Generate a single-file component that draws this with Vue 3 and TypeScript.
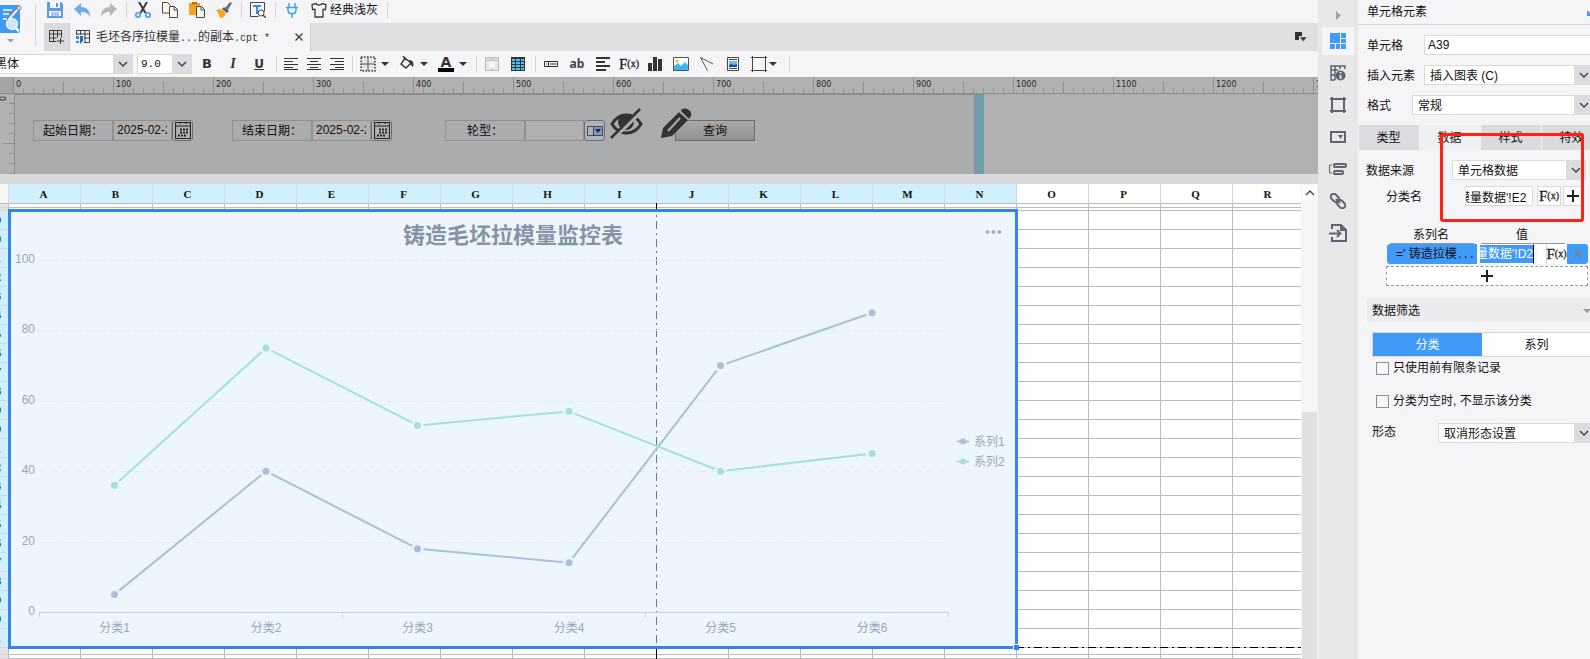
<script setup lang="ts">
import { ref } from 'vue'

interface Series { name: string; color: string; values: number[] }

const columns = 'ABCDEFGHIJKLMNOPQR'.split('')
const selectedColumns = 14
const rows = Array.from({ length: 23 }, (_, i) => 39 + i)
const rulerMarks = Array.from({ length: 14 }, (_, i) => i * 100)

const categories = ['分类1', '分类2', '分类3', '分类4', '分类5', '分类6']
const series: Series[] = [
  { name: '系列1', color: '#a7c1db', values: [5, 40, 18, 14, 70, 85] },
  { name: '系列2', color: '#a6e0dc', values: [36, 75, 53, 57, 40, 45] },
]
const gridValues = [20, 40, 60, 80, 100]

const px = (i: number): number => 106.5 + i * 151.5
const py = (v: number): number => 403 - v * 3.52
const segments = (s: Series) =>
  s.values.slice(1).map((v, i) => {
    const x1 = px(i), y1 = py(s.values[i]), x2 = px(i + 1), y2 = py(v)
    const d = Math.hypot(x2 - x1, y2 - y1)
    const ux = ((x2 - x1) / d) * 6
    const uy = ((y2 - y1) / d) * 6
    return { x1: x1 + ux, y1: y1 + uy, x2: x2 - ux, y2: y2 - uy }
  })

const fontName = ref('黑体')
const fontSize = ref('9.0')
const startDate = ref('2025-02-24')
const endDate = ref('2025-02-24')
const wheelType = ref('')
const cellName = ref('A39')
const categoryRef = ref("模量数据'!E2")
const valueRef = ref("量数据'!D2")
const limitRecords = ref(false)
const hideEmpty = ref(false)
</script>

<template>
  <div class="designer">
    <main class="main">
      <header class="top">
        <div class="brand">
          <svg width="22" height="42" viewBox="0 0 22 42">
            <rect x="-4" y="5" width="24" height="28" rx="2" fill="#409af7" />
            <path d="M3 10h9M3 14h6M3 19h4" stroke="#fff" stroke-width="1.5" />
            <path d="M8 18L17 8l3 1-9 10-4 1z" fill="#f3f3f5" stroke="#6b6f77" stroke-width=".8" />
            <circle cx="19" cy="8" r="2" fill="#e4e6ea" stroke="#6b6f77" stroke-width=".8" />
            <circle cx="12" cy="24" r="5.500" fill="#cfe4fb" stroke="#fff" stroke-width="1.200" />
            <path d="M15.500 28l3.500 3" stroke="#fff" stroke-width="2.500" />
            <path d="M7 39h7l-3.500 4z" fill="#a4a4a6" />
          </svg>
        </div>
        <div class="top-rows">
          <div class="quick">
            <button aria-label="保存"><svg width="16" height="16" viewBox="0 0 16 16"><path d="M0 0h14l2 2v14H0z" fill="#5b9be4" /><rect x="3" y="0" width="10" height="6" fill="#f4f8fd" /><rect x="9" y="1" width="2" height="4" fill="#5b9be4" /><rect x="2" y="9" width="12" height="5" fill="#f4f8fd" /><path d="M4 11h8M4 13h8" stroke="#5b9be4" /></svg></button>
            <button aria-label="撤销"><svg width="16" height="16" viewBox="0 0 16 16"><path d="M0 7l7-6v4c6 0 9 4 9 10-2-4-5-5-9-5v4z" fill="#6fabea" /></svg></button>
            <button aria-label="重做"><svg width="16" height="16" viewBox="0 0 16 16"><path d="M16 7L9 1v4C3 5 0 9 0 15c2-4 5-5 9-5v4z" fill="#b7b7b9" /></svg></button>
            <i class="sep"></i>
            <button aria-label="剪切"><svg width="16" height="16" viewBox="0 0 16 16"><path d="M4 0l6.500 11M12 0L5.500 11" stroke="#3b3b3f" stroke-width="2" fill="none" /><circle cx="3" cy="13" r="2.200" fill="none" stroke="#409af7" stroke-width="1.600" /><circle cx="13" cy="13" r="2.200" fill="none" stroke="#409af7" stroke-width="1.600" /></svg></button>
            <button aria-label="复制"><svg width="16" height="16" viewBox="0 0 16 16"><path d="M.5.5h5l3 3v7.500h-8z" fill="#fff8e6" stroke="#47474b" /><path d="M7.500 4.500h5l3 3v8h-8z" fill="#fff8e6" stroke="#47474b" /><path d="M12 5v3h3" fill="none" stroke="#47474b" /></svg></button>
            <button aria-label="粘贴"><svg width="16" height="16" viewBox="0 0 16 16"><path d="M0 1h11v12H0z" fill="#f3a61d" /><path d="M3 0h5v2.500H3z" fill="#c8651f" /><path d="M7.500 4.500h5l3 3v8h-8z" fill="#fff8e6" stroke="#47474b" /><path d="M12 5v3h3" fill="none" stroke="#47474b" /></svg></button>
            <button aria-label="格式刷"><svg width="16" height="16" viewBox="0 0 16 16"><path d="M0 8l5-1 5 4c-1 3-3 5-6 5-1-3-2-6-4-8z" fill="#f4a81c" /><path d="M6 7l2-2 5 4-2 2z" fill="#58585e" /><path d="M9 6l5-6 2 1-4 7z" fill="#6b6f77" /></svg></button>
            <i class="sep"></i>
            <button aria-label="查找"><svg width="16" height="16" viewBox="0 0 16 16"><path d="M.5.5h14v9M.5.500v14h8" fill="none" stroke="#47474b" /><path d="M3 4h8M7 4v8" stroke="#2f8ff0" stroke-width="2" /><circle cx="11" cy="11" r="3" fill="#fff" stroke="#47474b" /><path d="M13 13l3 3" stroke="#47474b" stroke-width="1.500" /></svg></button>
            <i class="sep"></i>
            <button aria-label="连接"><svg width="16" height="16" viewBox="0 0 16 16"><path d="M5 1v4M11 1v4M2 5.500h12M4 6v2c0 5 8 5 8 0V6M8 12v4" fill="none" stroke="#36a9e6" stroke-width="1.500" /></svg></button>
            <button class="theme"><svg width="16" height="16" viewBox="0 0 16 16"><path d="M5 1.500c1 2 5 2 6 0l4 1-.5 5H12v7.500H4V7.500H1.500L1 2.500z" fill="none" stroke="#3b3b3f" stroke-width="1.300" /></svg>经典浅灰</button>
            <i class="sep"></i>
          </div>
          <div class="tabs">
            <button class="new-tab" aria-label="新建"><svg width="15" height="14" viewBox="0 0 15 14"><path d="M.5.5h12v7M.5.500v11h7M.5 4h12M.5 8h7M4.500.500v11M8.500.500v7M11.500 8v6M8 11h7" fill="none" stroke="#3b3b3f" /></svg></button>
            <div class="tab">
              <svg width="14" height="14" viewBox="0 0 14 14"><path d="M.5 5V.5h13v12H8M.5 4h13M8 8h5.500M4.500.500v4M9 .5v12" fill="none" stroke="#3b3b3f" /><path d="M0 6h3v3H0zM0 11h3v2H0z" fill="#2b8fd8" /><path d="M4 6h3v5l-3 3z" fill="#1f6fb5" /></svg>
              <span>毛坯各序拉模量<b>...</b>的副本<b>.cpt *</b></span>
              <button aria-label="关闭"><svg width="8" height="8" viewBox="0 0 8 8"><path d="M.5.5l7 7M7.500.500l-7 7" stroke="#333" stroke-width="1.200" /></svg></button>
            </div>
            <button class="tab-menu" aria-label="标签列表"><svg width="12" height="10" viewBox="0 0 12 10"><path d="M0 0h7v4H4v4H0z" fill="#333" /><path d="M4.500 5h7.500l-3.700 4.500z" fill="#333" stroke="#dfdfe1" stroke-width=".5" /></svg></button>
          </div>
        </div>
      </header>

      <div class="format">
        <label class="combo font"><select v-model="fontName" aria-label="字体"><option>黑体</option></select><svg class="chev" viewBox="0 0 20 18"><path d="M6 7l4 4 4-4" /></svg></label>
        <label class="combo size"><select v-model="fontSize" aria-label="字号"><option>9.0</option></select><svg class="chev" viewBox="0 0 20 18"><path d="M6 7l4 4 4-4" /></svg></label>
        <button class="w26 bold">B</button>
        <button class="w26 italic">I</button>
        <button class="w26 under">U</button>
        <i class="sep"></i>
        <button class="w23" aria-label="左对齐"><svg width="14" height="12" viewBox="0 0 14 12"><path d="M0 .5h14M0 3.500h9M0 6.500h14M0 9.500h9M0 11.500h14" stroke="#333" /></svg></button>
        <button class="w23" aria-label="居中"><svg width="14" height="12" viewBox="0 0 14 12"><path d="M0 .5h14M3 3.500h8M0 6.500h14M3 9.500h8M0 11.500h14" stroke="#333" /></svg></button>
        <button class="w23" aria-label="右对齐"><svg width="14" height="12" viewBox="0 0 14 12"><path d="M0 .5h14M5 3.500h9M0 6.500h14M5 9.500h9M0 11.500h14" stroke="#333" /></svg></button>
        <i class="sep"></i>
        <button class="drop" aria-label="边框"><svg width="16" height="16" viewBox="0 0 16 16"><rect x="1" y="1" width="14" height="14" fill="#e4e4e8" stroke="#333" stroke-width="1.500" stroke-dasharray="1.500 1.500" /><path d="M8 1v14M1 8h14" stroke="#555" /></svg><i class="caret"></i></button>
        <button class="drop" aria-label="填充"><svg width="16" height="16" viewBox="0 0 16 16"><path d="M0 12h16v4H0z" fill="#fff" /><path d="M6 2l6 5-5 5-5-4zM4 0l3 4" fill="none" stroke="#333" stroke-width="1.400" /><path d="M10 4c4 0 5 3 4 7l-3-3z" fill="#333" /></svg><i class="caret"></i></button>
        <button class="drop" aria-label="字体颜色"><span class="ink">A</span><i class="caret"></i></button>
        <i class="sep"></i>
        <button class="w26" aria-label="合并"><svg width="14" height="14" viewBox="0 0 14 14"><path d="M.5.500h13v13H.5zM.5 3h13M7 0v3M7 11v3" fill="#e6e6e8" stroke="#b9b9bb" /><rect x="4" y="5" width="6" height="6" fill="#f7f7f8" /></svg></button>
        <button class="w26" aria-label="表格"><svg width="14" height="14" viewBox="0 0 14 14"><path d="M0 0h14v14H0z" fill="#333" /><path d="M1 2h3v2H1zM5 2h4v2H5zM10 2h3v2h-3zM1 5h3v2H1zM5 5h4v2H5zM10 5h3v2h-3zM1 8h3v2H1zM5 8h4v2H5zM10 8h3v2h-3zM1 11h3v2H1zM5 11h4v2H5zM10 11h3v2h-3z" fill="#4fc0f5" /></svg></button>
        <i class="sep"></i>
        <button class="w26" aria-label="控件"><svg width="14" height="6" viewBox="0 0 14 6"><path d="M.5.500h13v5H.5zM4.500 1v4M6 3h6M2 3h1" fill="none" stroke="#333" /></svg></button>
        <button class="w26 ab">ab</button>
        <button class="w26" aria-label="段落"><svg width="14" height="14" viewBox="0 0 14 14"><path d="M0 1h14M0 5h9M0 9h14M0 13h10" stroke="#333" stroke-width="2" /></svg></button>
        <button class="w26 fx">F<small>(x)</small></button>
        <button class="w26" aria-label="图表"><svg width="14" height="14" viewBox="0 0 14 14"><path d="M0 6h4v8H0zM5 0h4v14H5zM10 2h4v12h-4z" fill="#333" /></svg></button>
        <button class="w26" aria-label="图片"><svg width="16" height="14" viewBox="0 0 16 14"><path d="M.5.500h15v13H.5z" fill="#fff" stroke="#555" /><path d="M1 13V9l4-3 3 3 4-4 3 3v5z" fill="#3fb8ef" /><circle cx="4" cy="4" r="1.500" fill="#f6b73c" /></svg></button>
        <button class="w26" aria-label="斜线"><svg width="14" height="14" viewBox="0 0 14 14"><path d="M13 7L.5.500l7 13" fill="none" stroke="#555" /></svg></button>
        <button class="w26" aria-label="子报表"><svg width="12" height="14" viewBox="0 0 12 14"><path d="M.5.500h11v13H.5z" fill="#fff" stroke="#444" /><path d="M2 2.500h8M2 11.500h8" stroke="#444" /><path d="M2 4h8v6H2z" fill="#6db4f7" /><path d="M2 10V8l2-1 3 1 3-1v3z" fill="#174f9b" /></svg></button>
        <button class="drop" aria-label="悬浮元素"><svg width="16" height="16" viewBox="0 0 16 16"><path d="M1.500 0v16M14.500 0v16M0 1.500h16M0 14.500h16" stroke="#444" fill="none" /></svg><i class="caret near"></i></button>
        <i class="sep"></i>
      </div>

      <div class="ruler">
        <div class="corner"></div>
        <div class="marks"><span v-for="m in rulerMarks" :key="m">{{ m }}</span></div>
      </div>

      <section class="params">
        <div class="vruler"><span>0</span></div>
        <div class="canvas">
          <div class="field">
            <label for="start">起始日期：</label><input id="start" v-model="startDate">
            <button aria-label="选择起始日期"><svg width="16" height="17" viewBox="0 0 16 17"><path d="M.5.500h15v16H.5zM1 4h14M5 0v2M11 0v2" fill="none" stroke="#252525" stroke-width="1.200" /><path d="M5 7.500h8M5 10.500h8M3 13.500h8" stroke="#252525" stroke-width="2" stroke-dasharray="2 1" /></svg></button>
          </div>
          <div class="field">
            <label for="end">结束日期：</label><input id="end" v-model="endDate">
            <button aria-label="选择结束日期"><svg width="16" height="17" viewBox="0 0 16 17"><path d="M.5.500h15v16H.5zM1 4h14M5 0v2M11 0v2" fill="none" stroke="#252525" stroke-width="1.200" /><path d="M5 7.500h8M5 10.500h8M3 13.500h8" stroke="#252525" stroke-width="2" stroke-dasharray="2 1" /></svg></button>
          </div>
          <div class="field last">
            <label for="wheel">轮型：</label><input id="wheel" v-model="wheelType">
            <button aria-label="选择轮型"><svg width="16" height="10" viewBox="0 0 16 10"><path d="M.5.500h15v9H.5zM6.500 0v10" fill="none" stroke="#34496f" /><path d="M7 1h8v8H7z" fill="#8298b5" /><path d="M8 3h6l-3 4z" fill="#14265c" /></svg></button>
          </div>
          <div class="query">
            <button>查询</button>
            <svg class="eye" width="33" height="31" viewBox="0 0 33 31"><path d="M2 16C9 4 24 4 31 16 24 28 9 28 2 16z" fill="none" stroke="#333" stroke-width="3" /><circle cx="16" cy="14" r="8" fill="#333" /><path d="M2 31L32 2" stroke="#abacae" stroke-width="5" /><path d="M1 30L30 1" stroke="#333" stroke-width="2.500" /></svg>
            <svg class="pencil" width="31" height="31" viewBox="0 0 31 31"><path d="M0 30l2-10L18 4l9 8-16 16z" fill="#333" /><path d="M20 2c3-4 12 0 10 6l-2 3-8-8z" fill="#333" /><path d="M18 3l10 9" stroke="#abacae" stroke-width="1.300" /><path d="M7 23L19 10" stroke="#abacae" stroke-width="2" /></svg>
          </div>
        </div>
        <div class="edge"></div>
      </section>

      <section class="sheet-wrap">
        <div class="sheet">
          <table>
            <colgroup><col class="rowcol"><col v-for="c in columns" :key="c"></colgroup>
            <thead>
              <tr><th></th><th v-for="(c, i) in columns" :key="c" :class="{ on: i < selectedColumns }">{{ c }}</th></tr>
            </thead>
            <tbody>
              <tr class="r4"><th></th><td v-for="c in columns" :key="c"></td></tr>
              <tr class="r3"><th></th><td v-for="c in columns" :key="c"></td></tr>
              <tr v-for="r in rows" :key="r" class="r19"><th>{{ r }}</th><td v-for="c in columns" :key="c"></td></tr>
              <tr class="r7"><th></th><td v-for="c in columns" :key="c"></td></tr>
              <tr class="r4"><th></th><td v-for="c in columns" :key="c"></td></tr>
            </tbody>
          </table>
          <div class="page-line"></div>
          <svg class="page-v" width="1" height="460"><path d="M.5 0v7M.5 446v14" stroke="#000" /></svg>
          <div class="chart">
            <svg width="1010" height="440" viewBox="0 0 1010 440" role="img" aria-label="铸造毛坯拉模量监控表">
              <rect x="1.500" y="1.500" width="1007" height="437" fill="#edf6fe" stroke="#3484f0" stroke-width="3" />
              <path d="M648.500 3v434" stroke="#6d7782" stroke-dasharray="2 4 8 4" stroke-dashoffset="-3" />
              <text x="505" y="34" class="title">铸造毛坯拉模量监控表</text>
              <g fill="#a9b1bc"><circle cx="979.500" cy="23" r="2" /><circle cx="985.500" cy="23" r="2" /><circle cx="991.500" cy="23" r="2" /></g>
              <g v-for="v in gridValues" :key="v">
                <path :d="`M31 ${Math.round(py(v)) + .5}H940`" stroke="#deebf7" stroke-dasharray="6 6" />
                <text x="27" :y="py(v) + 3" class="value">{{ v }}</text>
              </g>
              <text x="27" :y="py(0) + 3" class="value">0</text>
              <path d="M31.500 408v-4.500H940.500V408M334.500 403v5M637.500 403v5" fill="none" stroke="#c0d3e6" />
              <text v-for="(c, i) in categories" :key="c" :x="px(i)" y="423" class="cat">{{ c }}</text>
              <g v-for="(s, k) in series" :key="s.name">
                <line v-for="(l, i) in segments(s)" :key="i" v-bind="l" :stroke="s.color" stroke-width="2" />
                <circle v-for="(v, i) in s.values" :key="'p' + i" :cx="px(i)" :cy="py(v)" r="3.500" :fill="s.color" />
                <path :d="`M949 ${232.500 + k * 20}h12`" :stroke="s.color" stroke-width="2" />
                <circle cx="955" :cy="232.5 + k * 20" r="3" :fill="s.color" />
                <text x="966" :y="237 + k * 20" class="legend">{{ s.name }}</text>
              </g>
            </svg>
            <i class="handle"></i>
          </div>
        </div>
        <div class="scroll">
          <button aria-label="向上滚动"><svg width="10" height="6" viewBox="0 0 10 6"><path d="M1 5l4-4 4 4" fill="none" stroke="#444" stroke-width="1.300" /></svg></button>
          <div class="thumb"></div>
        </div>
      </section>
    </main>

    <nav class="rail">
      <button class="fold" aria-label="折叠"><svg width="5" height="9" viewBox="0 0 5 9"><path d="M0 0l5 4.500L0 9z" fill="#a2a2a5" /></svg></button>
      <button class="on" aria-label="单元格元素"><svg width="16" height="16" viewBox="0 0 16 16"><path d="M0 0h10v10H0zM11 0h5v5h-5zM11 6h5v4h-5zM0 11h5v5H0zM6 11h4v5H6zM11 11h5v5h-5z" fill="#409af7" /></svg></button>
      <button aria-label="单元格属性"><svg width="16" height="16" viewBox="0 0 16 16"><path d="M5 15H1V1h14v3M1 5h7M1 10h4M5 1v14M10 1v3" fill="none" stroke="#5f6470" stroke-width="1.500" /><circle cx="10.500" cy="10.500" r="5" fill="#5f6470" /><path d="M10.500 10v4M10.500 7v1.500" stroke="#e8e8e9" stroke-width="1.800" /></svg></button>
      <button aria-label="悬浮元素"><svg width="16" height="16" viewBox="0 0 16 16"><path d="M2 2h12v12H2z" fill="none" stroke="#5f6470" stroke-width="2" /><path d="M0 1h3v2H0zM13 1h3v2h-3zM0 13h3v2H0zM13 13h3v2h-3zM1 0h2v3H1zM13 0h2v3h-2zM1 13h2v3H1zM13 13h2v3h-2z" fill="#5f6470" /></svg></button>
      <button aria-label="控件设置"><svg width="16" height="12" viewBox="0 0 16 12"><rect x="1" y="1" width="14" height="10" fill="none" stroke="#5f6470" stroke-width="2" /><path d="M8 4h5l-2.500 4z" fill="#5f6470" /></svg></button>
      <button aria-label="条件属性"><svg width="18" height="12" viewBox="0 0 18 12"><path d="M3 2H.5v8H3" fill="none" stroke="#5f6470" /><rect x="5" y="1" width="12" height="3" rx="1" fill="none" stroke="#5f6470" stroke-width="2" /><rect x="5" y="8" width="9" height="3" rx="1" fill="none" stroke="#5f6470" stroke-width="2" /></svg></button>
      <button aria-label="超级链接"><svg width="16" height="16" viewBox="0 0 16 16"><g transform="rotate(45 8 8)" fill="none" stroke="#5f6470" stroke-width="2"><rect x="-1" y="5" width="9" height="6" rx="3" /><rect x="8" y="5" width="9" height="6" rx="3" /><path d="M5 8h6" /></g></svg></button>
      <button aria-label="导出"><svg width="18" height="18" viewBox="0 0 18 18"><path d="M3 5V1h9l5 5v11H3v-4" fill="none" stroke="#5f6470" stroke-width="2" /><path d="M11 1v6h6z" fill="#5f6470" /><path d="M0 9.500h11M8 6l3.500 3.500L8 13" fill="none" stroke="#5f6470" stroke-width="1.800" /></svg></button>
    </nav>

    <aside class="panel">
      <div class="panel-body">
        <h2>单元格元素<svg class="pin" width="6" height="6" viewBox="0 0 6 6"><path d="M0 0l6 6H0z" fill="#409af7" /></svg></h2>
        <div class="basic">
          <div class="row"><label for="cell" class="l57">单元格</label><input id="cell" v-model="cellName" class="box"></div>
          <div class="row"><label for="insert" class="l57">插入元素</label><span class="combo"><select id="insert"><option>插入图表 (C)</option></select><svg class="chev" viewBox="0 0 20 18"><path d="M6 7l4 4 4-4" /></svg></span></div>
          <div class="row"><label for="fmt" class="l45">格式</label><span class="combo"><select id="fmt"><option>常规</option></select><svg class="chev" viewBox="0 0 20 18"><path d="M6 7l4 4 4-4" /></svg></span></div>
        </div>
        <div class="ptabs"><button>类型</button><button class="on">数据</button><button>样式</button><button>特效</button></div>
        <div class="source">
          <div class="row"><label for="src">数据来源</label><span class="combo"><select id="src"><option>单元格数据</option></select><svg class="chev" viewBox="0 0 20 18"><path d="M6 7l4 4 4-4" /></svg></span></div>
          <div class="row cate"><label for="cat">分类名</label><input id="cat" v-model="categoryRef" class="box"><button class="fx box">F<small>(x)</small></button><button class="box add" aria-label="添加分类"><svg width="12" height="12" viewBox="0 0 12 12"><path d="M6 0v12M0 6h12" stroke="#222" stroke-width="2" /></svg></button></div>
        </div>
        <div class="series">
          <div class="shead"><span>系列名</span><span>值</span></div>
          <div class="srow"><span class="sname">=' 铸造拉模<b>...</b></span><input v-model="valueRef" aria-label="值"><button class="fx">F<small>(x)</small></button><button class="del" aria-label="删除"><svg width="8" height="8" viewBox="0 0 8 8"><path d="M1 1l6 6M7 1L1 7" stroke="#77818f" stroke-width="2" /></svg></button></div>
          <button class="append" aria-label="添加系列"><svg width="12" height="12" viewBox="0 0 12 12"><path d="M6 0v12M0 6h12" stroke="#222" stroke-width="2" /></svg></button>
        </div>
        <h3>数据筛选<i class="caret"></i></h3>
        <div class="filter">
          <div class="switch"><button class="on">分类</button><button>系列</button></div>
          <label class="check"><input v-model="limitRecords" type="checkbox">只使用前有限条记录</label>
          <label class="check second"><input v-model="hideEmpty" type="checkbox">分类为空时, 不显示该分类</label>
          <div class="row"><label for="shape">形态</label><span class="combo"><select id="shape"><option>取消形态设置</option></select><svg class="chev" viewBox="0 0 20 18"><path d="M6 7l4 4 4-4" /></svg></span></div>
        </div>
        <div class="callout"></div>
      </div>
    </aside>
  </div>
</template>

<style>
body { margin: 0; overflow: hidden; }
</style>

<style scoped>
* { box-sizing: border-box; }
.designer { display: flex; height: 100vh; overflow: hidden; background: #f5f5f8; color: #111; font: 12px/16px "Liberation Sans", "Noto Sans CJK SC", sans-serif; }
button, input, select { font: inherit; color: inherit; margin: 0; padding: 0; border: 0; border-radius: 0; background: none; outline: 0; }
button { display: flex; align-items: center; justify-content: center; flex: none; }
svg { display: block; flex: none; }
.main { flex: 1; min-width: 0; display: flex; flex-direction: column; }
.sep { width: 1px; height: 16px; background: #d5d5d8; flex: none; }
.top { display: flex; height: 51px; flex: none; }
.brand { width: 44px; background: linear-gradient(#d5d5d8, #d5d5d8) 35px 4px / 1px 42px no-repeat; }
.top-rows { flex: 1; min-width: 0; }
.quick { height: 23px; display: flex; align-items: center; gap: 11px; padding: 0 0 3px 3px; }
.quick .sep { margin: 0 -3px 0 -2px; }
.theme { gap: 3px; }
.tabs { height: 28px; display: flex; background: #dfdfe1; }
.new-tab { width: 26px; background: #dadadd; border-right: 1px solid #cfcfd2; }
.tab { width: 241px; display: flex; align-items: center; background: #f5f5f8; border-right: 1px solid #cfcfd2; padding: 0 7px 0 6px; gap: 6px; color: #333; }
.tab span { flex: 1; white-space: nowrap; padding-top: 2px; }
.tab b, .sname b { font: 10px/16px "Liberation Mono", monospace; }
.tab-menu { margin: 0 11px 0 auto; }
.format { height: 26px; display: flex; align-items: center; flex: none; }
.format .sep { margin: 0 2px 0 4px; }
.combo { position: relative; display: flex; height: 20px; }
.combo select { appearance: none; flex: 1; min-width: 0; background: #fff; border: 1px solid #dadade; padding: 0 20px 0 5px; }
.chev { position: absolute; right: 0; top: 0; width: 20px; height: 20px; background: #dadce0; pointer-events: none; fill: none; stroke: #444; stroke-width: 1.5; }
.font { width: 143px; margin: 0 4px 0 -10px; }
.font select { padding-left: 4px; }
.size { width: 55px; margin-right: 2px; }
.size select { padding-left: 3px; font-family: "Liberation Mono", monospace; font-size: 11px; }
.w26 { width: 26px; height: 20px; }
.w23 { width: 23px; height: 20px; }
.bold { font: bold 13px/16px "DejaVu Sans", sans-serif; color: #333; }
.italic { font: italic bold 14px/16px "Liberation Serif", serif; color: #333; }
.under { font: bold 12px/14px "DejaVu Sans", sans-serif; text-decoration: underline; color: #333; }
.ab { font: bold 12px/16px "Noto Sans", sans-serif; color: #444; }
.fx { font: 15px/16px "Liberation Serif", serif; color: #222; -webkit-text-stroke: 0.3px #222; }
.fx small { font-size: 10px; line-height: 16px; }
.drop { width: 39px; padding-left: 5px; gap: 5px; justify-content: flex-start; }
.caret { border: 4px solid transparent; border-top: 4px solid #333; border-bottom: 0; }
.caret.near { margin-left: -3px; }
.ink { width: 16px; height: 16px; border-bottom: 4px solid #000; font: bold 14px/12px "DejaVu Sans", sans-serif; color: #333; text-align: center; }
.ruler { display: flex; height: 17px; flex: none; background: #b1b1b1; border-bottom: 1px solid #8d8d8d; overflow: hidden; }
.corner { width: 13px; background: #a5a5a5; flex: none; }
.marks { display: flex; flex: 1; min-width: 0; overflow: hidden; background:
  repeating-linear-gradient(90deg, #8f8f8f 0 1px, transparent 1px 100px) 0 0 / 100% 16px no-repeat,
  repeating-linear-gradient(90deg, #8f8f8f 0 1px, transparent 1px 50px) 0 5px / 100% 11px no-repeat,
  repeating-linear-gradient(90deg, #939393 0 1px, transparent 1px 10px) 0 11px / 100% 5px no-repeat; }
.marks span { width: 100px; flex: none; padding: 1px 0 0 3px; font: 9px/13px "DejaVu Sans Condensed", "DejaVu Sans", sans-serif; color: #2b2b2b; }
.params { display: flex; height: 80px; flex: none; background: #b1b1b1; }
.vruler { width: 14px; background: repeating-linear-gradient(#b1b1b1 0 9px, #919191 9px 10px) right 0 / 5px 100% no-repeat, linear-gradient(#919191, #919191) right 49px / 11px 1px no-repeat; }
.vruler span { display: block; width: 6px; font: 9px/8px "DejaVu Sans Condensed", sans-serif; transform: rotate(-90deg); color: #2b2b2b; }
.canvas { width: 961px; background: #abacae; border: 1px solid #8d8d8d; border-bottom: 0; display: flex; align-items: flex-start; padding: 25px 0 0 18px; }
.edge { width: 9px; background: #6f9fac; }
.field { display: flex; width: 160px; height: 21px; margin-right: 39px; }
.field + .field { margin-right: 53px; }
.field.last { margin-right: 0; }
.field label { width: 80px; border: 1px solid #919191; text-align: center; line-height: 20px; flex: none; }
.field input { width: 59px; flex: none; border: 1px solid #919191; background: #afafaf; padding: 0 4px 2px 3px; }
.field button { width: 21px; border: 1px solid #6c6c6c; border-radius: 3px; background: #b1b1b1; }
.query { position: relative; margin-left: 70px; }
.query button { width: 80px; height: 21px; border: 1px solid #6c6c6c; background: linear-gradient(#a9a9a9, #929292); }
.eye { position: absolute; left: -65px; top: -12px; }
.pencil { position: absolute; left: -14px; top: -12px; }
.sheet-wrap { flex: 1; min-height: 0; display: flex; border-top: 10px solid #dadadc; }
.sheet { position: relative; flex: 1; min-width: 0; overflow: hidden; background: #fff; }
table { table-layout: fixed; width: 1305px; border-collapse: separate; border-spacing: 0; }
col { width: 72px; }
.rowcol { width: 9px; }
th, td { padding: 0; border-right: 1px solid #bcbcbc; border-bottom: 1px solid #bcbcbc; font: 12px/1px "Liberation Serif", serif; }
thead th { height: 20px; font: bold 11px/17px "Liberation Serif", serif; padding: 2px 2px 0 0; border-right-color: #d9d9db; background: #fff; }
thead th:first-child { background: #f5f5f8; padding: 0; }
thead th.on { background: #cff0fc; }
tbody th { background: #e4e4e6; border-bottom-color: #d9d5d9; }
.r4 td, .r4 th { height: 4px; }
.r3 td, .r3 th { height: 3px; }
.r7 td, .r7 th { height: 7px; }
.r19 td { height: 19px; }
.r19 th { height: 19px; background: #cff0fc; text-indent: -11px; text-align: left; color: #000; font: bold 12px/18px "Liberation Serif", serif; overflow: hidden; }
.page-line { position: absolute; left: 1018px; right: 0; top: 463px; height: 1px; background: repeating-linear-gradient(90deg, #000 0 6px, #bbb 6px 10px, #000 10px 12px, #bbb 12px 16px, #000 16px 24px, #bbb 24px 24px); }
.page-line { background: repeating-linear-gradient(90deg, #000 0 8px, #bbb 8px 12px, #000 12px 14px, #bbb 14px 18px) -2px 0; }
.page-v { position: absolute; left: 656px; top: 19px; }
.chart { position: absolute; left: 8px; top: 25px; }
.chart text { font: 12px "Liberation Sans", "Noto Sans CJK SC", sans-serif; fill: #99a7ba; }
.chart .title { font-size: 22px; font-weight: bold; text-anchor: middle; fill: #8593a5; }
.chart .value { text-anchor: end; }
.chart .cat { text-anchor: middle; }
.handle { position: absolute; right: -1px; bottom: -1px; width: 6px; height: 6px; background: #3484f0; border: 1px solid #edf6fe; border-width: 1px 0 0 1px; }
.scroll { width: 17px; flex: none; padding: 1px 1px 0; display: flex; flex-direction: column; }
.scroll button { width: 15px; height: 15px; background: #fff; }
.thumb { margin-top: 212px; flex: 1; background: #e0e0e0; }
.rail { width: 40px; flex: none; background: #e8e8e9; padding: 0 4px; display: flex; flex-direction: column; gap: 4px; }
.rail button { height: 28px; }
.rail .fold { height: 23px; padding-top: 7px; }
.rail .on { background: #f5f5f8; }
.panel { width: 232px; flex: none; overflow: hidden; }
.panel-body { position: relative; margin-right: -4px; }
h2 { margin: 0; height: 25px; padding: 4px 1px 0 9px; display: flex; justify-content: space-between; font: inherit; border-bottom: 1px solid #d8d8da; }
.pin { margin-top: 6px; }
.basic { padding: 10px 0; display: grid; gap: 10px; }
.row { display: flex; align-items: center; height: 20px; padding-left: 9px; }
.row label { padding-top: 1px; }
.row .combo { flex: 1; min-width: 0; }
.row select { padding-top: 1px; }
.box { height: 20px; background: #fff; border: 1px solid #dadade; }
#cell { flex: 1; min-width: 0; padding-left: 3px; }
.l57 { width: 57px; }
.l45 { width: 45px; }
.ptabs { display: flex; gap: 1px; height: 25px; padding-left: 1px; }
.ptabs button { width: 60px; background: #d9dbde; padding-right: 1px; }
.ptabs .on { background: #f0f0f2; }
.source { padding: 10px 8px 0 0; display: grid; gap: 6px; }
.source .row { padding-left: 8px; }
.source label { width: 86px; }
.source .cate { padding-left: 28px; }
.cate label { width: 79px; flex: none; }
.cate input { width: 68px; flex: none; text-indent: -8px; margin-right: 4px; }
.cate .fx { width: 24px; margin-right: 2px; }
.cate .add { width: 20px; }
.series { margin: 19px 6px 0 28px; }
.shead { display: flex; gap: 7px; padding-left: 4px; }
.shead span { width: 84px; height: 19px; padding: 2px 2px 0 0; line-height: 16px; text-align: center; border-bottom: 1px solid #999; }
.srow { display: flex; height: 20px; width: 201px; background: #409af7; border-radius: 3px; margin-left: 1px; overflow: hidden; }
.sname { width: 90px; flex: none; padding: 2px 0 0 9px; white-space: nowrap; }
.srow input { width: 57px; flex: none; border: solid #fff; border-width: 1px 0 1px 3px; border-right: 1px solid #111; background: #409af7; color: #fff; text-indent: -4px; }
.srow .fx { width: 33px; padding-left: 9px; background: linear-gradient(#dadade, #dadade) 9px 0 / 1px 100% no-repeat #fff; border-left: 3px solid #f5f5f8; }
.srow .del { flex: 1; }
.append { width: 202px; height: 20px; margin-top: 2px; border: 1px dashed #999; background: #fff; }
h3 { margin: 12px 0 0 9px; height: 24px; padding: 2px 3px 0 5px; display: flex; align-items: center; justify-content: space-between; font: inherit; background: #ececee; }
h3 .caret { border-top-color: #999; }
.filter { padding: 10px 0 0 14px; }
.switch { display: flex; height: 25px; border: 1px solid #d8d8da; margin-right: 2px; }
.switch button { flex: 1; background: #fff; }
.switch .on { background: #409af7; color: #fff; }
.check { display: flex; align-items: center; gap: 4px; height: 20px; margin: 1px 0 13px 4px; white-space: nowrap; }
.check input { appearance: none; width: 13px; height: 13px; border: 1px solid #8e8e92; background: #f8f8fa; }
.check input:checked { background: #409af7; }
.check.second { margin-bottom: 12px; }
.filter .row { padding-left: 0; }
.filter .row label { width: 66px; padding-bottom: 4px; }
.callout { position: absolute; left: 82px; top: 133px; width: 144px; height: 89px; border: 3px solid #ff2113; border-radius: 3px; pointer-events: none; }
</style>
